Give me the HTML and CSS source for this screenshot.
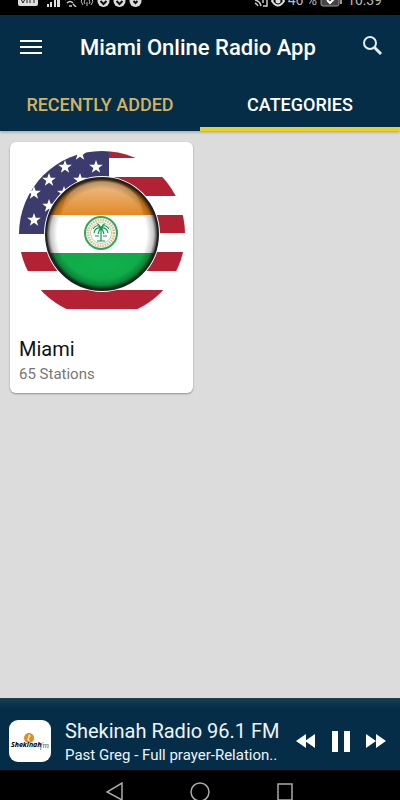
FILE: index.html
```
<!DOCTYPE html>
<html lang="en">
<head>
    <meta charset="UTF-8">
    <meta name="viewport" content="width=device-width, initial-scale=1.0">
    <title>Miami Online Radio App</title>
    <link rel="stylesheet" href="styles.css">
</head>
<body>
    <div class="status-bar">
        <div class="status-group">
            <svg class="volte" width="20" height="14" viewBox="0 0 20 14"><rect x="0" y="0" width="20" height="13" rx="2" fill="#ddd"/><path d="M3 6l2 4 2-4M9 6v4M12 6v4M14 6h4M16 6v4" stroke="#222" fill="none"/></svg>
            <svg width="14" height="14" viewBox="0 0 14 14" fill="#ddd"><path d="M0 11h2v3H0zM3 9h2v5H3zM7 5h2v9H7zM10 1h3v13h-3z"/></svg>
            <svg width="13" height="14" viewBox="0 0 13 14" fill="none" stroke="#ccc" stroke-width="1.5"><path d="M1 7q5-5 10 0M3 10q3-3 6 0M5 13h3M9 11l3 3"/></svg>
            <svg width="14" height="14" viewBox="0 0 14 14" fill="none" stroke="#bbb" stroke-width="1"><path d="M2 5q-2 4 1 7M5 7q-2 2 0 4M9 7q2 2 0 4M12 5q2 4-1 7M7 9v4"/></svg>
            <svg width="13" height="14" viewBox="0 0 12 14"><circle cx="6" cy="8" r="6" fill="#ddd"/><path d="M3 8l3 3 3-3" stroke="#111" stroke-width="2" fill="none"/></svg>
            <svg width="13" height="14" viewBox="0 0 12 14"><circle cx="6" cy="8" r="6" fill="#ddd"/><path d="M3 8l3 3 3-3" stroke="#111" stroke-width="2" fill="none"/></svg>
            <svg width="13" height="14" viewBox="0 0 12 14"><circle cx="6" cy="8" r="6" fill="#ddd"/><path d="M4 8l2 2 2-2" stroke="#111" stroke-width="2" fill="none"/></svg>
        </div>
        <div class="status-group">
            <svg width="14" height="14" viewBox="0 0 14 14" fill="none" stroke="#ccc" stroke-width="1.5"><path d="M1 5V2h12v11H9M1 7q5 1 6 6M1 10q2 1 3 3M9 4v6"/></svg>
            <svg width="14" height="14" viewBox="0 0 14 14"><path d="M1 8q6-9 12 0-6 9-12 0z" fill="none" stroke="#ddd" stroke-width="2"/><circle cx="7" cy="8" r="2.500" fill="#ddd"/></svg>
            <span>46 %</span>
            <svg width="22" height="14" viewBox="0 0 22 14"><rect x="1" y="1" width="18" height="12" rx="2" fill="#444" stroke="#999"/><rect x="20" y="4" width="2" height="7" fill="#999"/><path d="M7 7l3 3 4-4" stroke="#fff" stroke-width="2" fill="none"/></svg>
            <span class="clock">10:39</span>
        </div>
    </div>

    <header class="app-header">
        <div class="toolbar">
            <button class="icon-btn" aria-label="Menu">
                <svg width="22" height="16" viewBox="0 0 22 16" fill="#fff"><path d="M0 1h22v2H0zM0 7h22v2H0zM0 13h22v2H0z"/></svg>
            </button>
            <h1>Miami Online Radio App</h1>
            <button class="icon-btn" aria-label="Search">
                <svg width="22" height="22" viewBox="0 0 22 22" fill="none" stroke="#e2eef8"><circle cx="8" cy="7" r="6" stroke-width="2"/><path d="M12 11l7 7" stroke-width="3"/></svg>
            </button>
        </div>
        <nav class="tabs">
            <a href="#recent" class="tab">RECENTLY ADDED</a>
            <a href="#categories" class="tab active" aria-current="page">CATEGORIES</a>
        </nav>
    </header>

    <main class="grid">
        <a href="#miami" class="card">
            <svg class="card-image" viewBox="0 0 183 183" role="img" aria-label="Miami flag">
                <defs>
                    <clipPath id="disc"><path d="M0 0h183v167H0z" clip-path="url(#round)"/></clipPath>
                    <clipPath id="round"><circle cx="92" cy="92" r="83"/></clipPath>
                    <clipPath id="ball"><circle cx="92" cy="92" r="56"/></clipPath>
                    <radialGradient id="shade">
                        <stop offset="0.800" stop-color="#000" stop-opacity="0"/>
                        <stop offset="0.920" stop-color="#000" stop-opacity="0.220"/>
                        <stop offset="1" stop-color="#000" stop-opacity="0.850"/>
                    </radialGradient>
                    <linearGradient id="gloss" x1="0" y1="0" x2="0" y2="1">
                        <stop offset="0" stop-color="#fff" stop-opacity="0.500"/>
                        <stop offset="1" stop-color="#fff" stop-opacity="0.050"/>
                    </linearGradient>
                    <radialGradient id="green" cx="0.500" cy="0.300" r="0.800">
                        <stop offset="0" stop-color="#12b04c"/>
                        <stop offset="1" stop-color="#0fa445"/>
                    </radialGradient>
                    <path id="star" d="M0-7l1.700 4.800h5.100L2.700 .9l1.500 4.900L0 2.800l-4.200 3 1.500-4.900-4.100-3.100h5.100z" fill="#fff"/>
                </defs>
                <!-- flag -->
                <g clip-path="url(#disc)">
                    <path d="M99 9h84v7H99zM99 35h84v19H99zM99 73h84v18H99zM0 110h183v19H0zM0 148h183v19H0z" fill="#b22234"/>
                    <path d="M0 0h99v92H0z" fill="#3c3b6e"/>
                    <use href="#star" x="70" y="12"/>
                    <use href="#star" x="55" y="25"/>
                    <use href="#star" x="86" y="25"/>
                    <use href="#star" x="39" y="38"/>
                    <use href="#star" x="70" y="38"/>
                    <use href="#star" x="24" y="51"/>
                    <use href="#star" x="54" y="51"/>
                    <use href="#star" x="39" y="64"/>
                    <use href="#star" x="24" y="78"/>
                </g>
                <!-- glossy ball -->
                <circle cx="92" cy="92" r="58" fill="#fff"/>
                <g clip-path="url(#ball)">
                    <path d="M30 30h124v43H30z" fill="#e0841c"/>
                    <path d="M30 73h124v38H30z" fill="#fff"/>
                    <path d="M30 111h124v40H30z" fill="url(#green)"/>
                    <path d="M52 73C51 27 132 27 133 73z" fill="url(#gloss)"/>
                </g>
                <circle cx="92" cy="92" r="56" fill="url(#shade)"/>
                <circle cx="92" cy="92" r="56" fill="none" stroke="#222" stroke-width="2"/>
                <!-- city seal -->
                <circle cx="91" cy="91" r="16" fill="#fff" stroke="#24ad5c" stroke-width="2"/>
                <circle cx="91" cy="91" r="13" fill="none" stroke="#e9b98c" stroke-width="3" stroke-dasharray="1.500 1"/>
                <circle cx="91" cy="91" r="10.500" fill="#fff" stroke="#8fcda4" stroke-width="0.800"/>
                <path d="M91 86q-4-5-8 1M91 86q-6-1-7 5M91 86q-2 2-3 6M91 86q4-5 8 1M91 86q6-1 7 5M91 86q2 2 3 6M91 86q-2-4-4-4M91 86q2-4 4-4M91 86v13M87 99h8M85 94h4M93 94h4" fill="none" stroke="#169447" stroke-width="1.200"/>
            </svg>
            <div class="card-text">
                <h2>Miami</h2>
                <p>65 Stations</p>
            </div>
        </a>
    </main>

    <footer class="player">
        <svg class="cover" width="42" height="42" viewBox="0 0 42 42" role="img" aria-label="Shekinah FM">
            <rect width="42" height="42" rx="9" fill="#fff"/>
            <circle cx="20" cy="18" r="5" fill="#e08a28"/>
            <path d="M20 14l2 2-2 2 1 4-3-2 1-3z" fill="#ffe0a0"/>
            <text class="cover-name" x="2" y="27">Shekinah</text>
            <text class="cover-fm" x="31" y="28">fm</text>
        </svg>
        <div class="track">
            <div class="station">Shekinah Radio 96.1 FM</div>
            <div class="song">Past Greg - Full prayer-Relation..</div>
        </div>
        <div class="controls">
            <button aria-label="Previous"><svg width="20" height="14" viewBox="0 0 20 14" fill="#fff"><path d="M10 0v14L0 7zM19 0v14L9 7z"/></svg></button>
            <button aria-label="Pause"><svg width="18" height="21" viewBox="0 0 18 21" fill="#fff"><path d="M0 0h6v21H0zM12 0h6v21h-6z"/></svg></button>
            <button aria-label="Next"><svg width="20" height="14" viewBox="0 0 20 14" fill="#fff"><path d="M0 0v14l10-7zM10 0v14l10-7z"/></svg></button>
        </div>
    </footer>

    <div class="system-nav">
        <button aria-label="Back"><svg width="18" height="20" viewBox="0 0 18 20"><path d="M16 1v17L1 10z"/></svg></button>
        <button aria-label="Home"><svg width="20" height="20" viewBox="0 0 20 20"><circle cx="10" cy="10" r="9"/></svg></button>
        <button aria-label="Recent apps"><svg width="18" height="20" viewBox="0 0 18 20"><path d="M2 2h14v16H2z"/></svg></button>
    </div>
</body>
</html>
```
FILE: styles.css
```
* {
    margin: 0;
    padding: 0;
    box-sizing: border-box;
}

body {
    font-family: Roboto, 'Liberation Sans', sans-serif;
    background: #dcdcdc;
    height: 100vh;
    display: flex;
    flex-direction: column;
    overflow: hidden;
}

button {
    background: none;
    border: none;
    cursor: pointer;
}

a {
    text-decoration: none;
}

svg {
    display: block;
}

/* Status bar */
.status-bar {
    height: 15px;
    flex-shrink: 0;
    background: #000;
    color: #bbb;
    font-size: 14px;
    line-height: 14px;
    display: flex;
    justify-content: space-between;
    align-items: flex-end;
    padding: 0 18px 8px;
    overflow: hidden;
}

.status-group {
    display: flex;
    align-items: flex-end;
    gap: 3px;
}

.volte {
    margin-right: 6px;
}

.clock {
    margin-left: 2px;
}

/* Header */
.app-header {
    flex-shrink: 0;
    background: #062d47;
    box-shadow: 0 1px 3px rgba(0, 0, 0, 0.3);
}

.toolbar {
    height: 64px;
    display: flex;
    align-items: center;
    padding: 0 16px 0 20px;
}

.toolbar h1 {
    flex: 1;
    padding-left: 38px;
    color: #fff;
    font-size: 22px;
    font-weight: 500;
    white-space: nowrap;
}

.tabs {
    display: grid;
    grid-template-columns: 1fr 1fr;
}

.tab {
    height: 52px;
    padding-top: 2px;
    display: flex;
    align-items: center;
    justify-content: center;
    color: #d3b35f;
    font-size: 18px;
    font-weight: 500;
    border-bottom: 4px solid transparent;
}

.tab.active {
    color: #fff;
    border-bottom-color: #ead320;
}

/* Categories */
.grid {
    flex: 1;
    display: grid;
    grid-template-columns: 1fr 1fr;
    gap: 14px;
    align-items: start;
    padding: 11px 10px;
}

.card {
    background: #fff;
    border-radius: 6px;
    box-shadow: 0 1px 2px rgba(0, 0, 0, 0.35);
    overflow: hidden;
}

.card-image {
    width: 100%;
}

.card-text {
    padding: 10px 9px 8px;
}

.card h2 {
    color: #111;
    font-size: 20px;
    line-height: 28px;
    font-weight: 400;
}

.card p {
    color: #777;
    font-size: 15px;
    line-height: 22px;
}

/* Player */
.player {
    flex-shrink: 0;
    height: 72px;
    display: flex;
    align-items: center;
    padding: 14px 14px 0 9px;
    background: linear-gradient(#1b4054, #062d47 10px);
    color: #eef4fa;
}

.cover {
    flex-shrink: 0;
    margin-right: 14px;
}

.cover-name {
    font: italic bold 7px 'Open Sans', sans-serif;
}

.cover-fm {
    font: italic 9px 'Liberation Serif', serif;
    fill: #666;
}

.track {
    flex: 1;
    padding-top: 2px;
    white-space: nowrap;
}

.station {
    font-size: 20px;
    line-height: 26px;
}

.song {
    font-size: 15px;
    line-height: 22px;
}

.controls {
    display: flex;
    align-items: center;
    gap: 16px;
}

/* System navigation */
.system-nav {
    flex-shrink: 0;
    height: 30px;
    background: #000;
    display: flex;
    justify-content: center;
    gap: 66px;
    padding-top: 12px;
    overflow: hidden;
}

.system-nav svg {
    fill: none;
    stroke: #aaa;
    stroke-width: 1.5;
}
```
